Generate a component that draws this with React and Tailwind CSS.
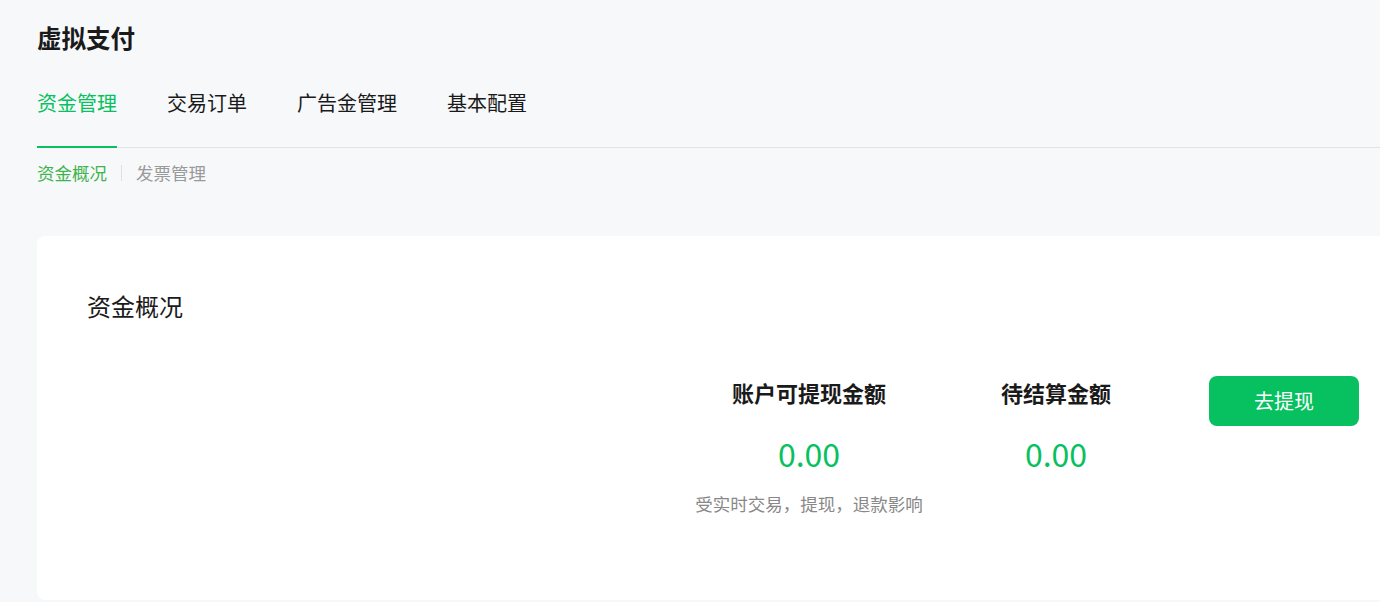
import React, { useState } from 'react';

const tabs = ['资金管理', '交易订单', '广告金管理', '基本配置'];
const subTabs = ['资金概况', '发票管理'];

const App = () => {
  const [active, setActive] = useState(0);
  const [sub, setSub] = useState(0);

  return (
    <div
      className="min-h-screen bg-[#f7f8fa] overflow-hidden"
      style={{ fontFamily: '"Noto Sans CJK SC", "Noto Sans", sans-serif' }}
    >
      <div className="pl-[37px] pt-[20px]">
        <h1 className="text-[24.5px] leading-[36px] font-bold text-[#1a1a1a]">虚拟支付</h1>
      </div>

      <div className="ml-[37px] mt-[32px] flex gap-[50px] border-b border-[#e2e3e6]">
        {tabs.map((t, i) => (
          <button
            key={t}
            onClick={() => setActive(i)}
            className={`relative pb-[29px] text-[20px] leading-[30px] ${
              active === i ? 'text-[#07c160]' : 'text-[#1a1a1a]'
            }`}
          >
            {t}
            {active === i && (
              <span className="absolute left-0 right-0 bottom-[-1px] h-[2px] bg-[#07c160]" />
            )}
          </button>
        ))}
      </div>

      <div className="ml-[37px] mt-[12px] flex items-center">
        {subTabs.map((t, i) => (
          <React.Fragment key={t}>
            {i > 0 && <span className="mx-[14px] h-[16px] w-px bg-[#e0e0e0]" />}
            <button
              onClick={() => setSub(i)}
              className={`text-[17.5px] leading-[26px] ${
                sub === i ? 'text-[#3fb34f]' : 'text-[#9a9a9a]'
              }`}
            >
              {t}
            </button>
          </React.Fragment>
        ))}
      </div>

      <div className="ml-[37px] mt-[50px] h-[364px] bg-white rounded-l-[8px]">
        <div className="pl-[50px] pt-[52px]">
          <h2 className="text-[24px] leading-[36px] text-[#1a1a1a]">资金概况</h2>
        </div>

        <div className="mt-[52px] flex justify-end pr-[21px] items-start">
          <div className="w-[248px] flex flex-col items-center">
            <div className="text-[22px] leading-[32px] font-bold text-[#1a1a1a]">账户可提现金额</div>
            <div className="mt-[23px] text-[32px] leading-[44px] text-[#07c160]">0.00</div>
            <div className="mt-[16px] text-[17.5px] leading-[26px] text-[#888888] whitespace-nowrap">
              受实时交易，提现，退款影响
            </div>
          </div>
          <div className="w-[246px] flex flex-col items-center">
            <div className="text-[22px] leading-[32px] font-bold text-[#1a1a1a]">待结算金额</div>
            <div className="mt-[23px] text-[32px] leading-[44px] text-[#07c160]">0.00</div>
          </div>
          <button className="ml-[30px] w-[150px] h-[50px] rounded-[8px] bg-[#07c160] text-white text-[20px]">
            去提现
          </button>
        </div>
      </div>
    </div>
  );
};

export default App;
